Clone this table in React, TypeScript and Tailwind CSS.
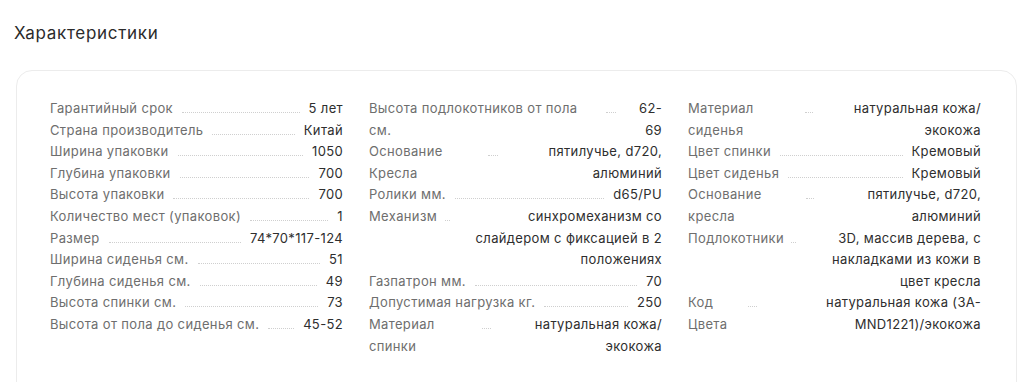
import React from "react";

type Row = {
  label: string[];
  value: string[];
  dots?: { x: number; w: number };
};

const col1: Row[] = [
  { label: ["Гарантийный срок"], value: ["5 лет"] },
  { label: ["Страна производитель"], value: ["Китай"] },
  { label: ["Ширина упаковки"], value: ["1050"] },
  { label: ["Глубина упаковки"], value: ["700"] },
  { label: ["Высота упаковки"], value: ["700"] },
  { label: ["Количество мест (упаковок)"], value: ["1"] },
  { label: ["Размер"], value: ["74*70*117-124"] },
  { label: ["Ширина сиденья см."], value: ["51"] },
  { label: ["Глубина сиденья см."], value: ["49"] },
  { label: ["Высота спинки см."], value: ["73"] },
  { label: ["Высота от пола до сиденья см."], value: ["45-52"] },
];

const col2: Row[] = [
  { label: ["Высота подлокотников от пола", "см."], value: ["62-", "69"], dots: { x: 237, w: 10 } },
  { label: ["Основание", "Кресла"], value: ["пятилучье, d720,", "алюминий"], dots: { x: 119, w: 10 } },
  { label: ["Ролики мм."], value: ["d65/PU"] },
  { label: ["Механизм"], value: ["синхромеханизм со", "слайдером с фиксацией в 2", "положениях"], dots: { x: 76, w: 5 } },
  { label: ["Газпатрон мм."], value: ["70"] },
  { label: ["Допустимая нагрузка кг."], value: ["250"] },
  { label: ["Материал", "спинки"], value: ["натуральная кожа/", "экокожа"], dots: { x: 113, w: 9 } },
];

const col3: Row[] = [
  { label: ["Материал", "сиденья"], value: ["натуральная кожа/", "экокожа"], dots: { x: 117, w: 8 } },
  { label: ["Цвет спинки"], value: ["Кремовый"] },
  { label: ["Цвет сиденья"], value: ["Кремовый"] },
  { label: ["Основание", "кресла"], value: ["пятилучье, d720,", "алюминий"], dots: { x: 118, w: 8 } },
  { label: ["Подлокотники"], value: ["3D, массив дерева, с", "накладками из кожи в", "цвет кресла"], dots: { x: 103, w: 5 } },
  { label: ["Код", "Цвета"], value: ["натуральная кожа (3А-", "MND1221)/экокожа"], dots: { x: 60, w: 9 } },
];

function Lines({ lines }: { lines: string[] }) {
  return (
    <>
      {lines.map((l, i) => (
        <div key={i} className="whitespace-nowrap">
          {l}
        </div>
      ))}
    </>
  );
}

function SpecRow({ row }: { row: Row }) {
  if (row.dots) {
    return (
      <div className="flex items-start">
        <div className="shrink-0 text-[#6e6e6e]" style={{ width: row.dots.x }}>
          <Lines lines={row.label} />
        </div>
        <div
          className="h-[15px] shrink-0 border-b border-dotted border-[#cfcfcf]"
          style={{ width: row.dots.w }}
        />
        <div className="flex-1 text-right text-[#2e2e2e]">
          <Lines lines={row.value} />
        </div>
      </div>
    );
  }
  return (
    <div className="flex items-start">
      <div className="shrink-0 whitespace-nowrap text-[#6e6e6e]">{row.label[0]}</div>
      <div className="mx-[9px] h-[15px] flex-1 border-b border-dotted border-[#cfcfcf]" />
      <div className="shrink-0 whitespace-nowrap text-right text-[#2e2e2e]">{row.value[0]}</div>
    </div>
  );
}

function Column({ rows }: { rows: Row[] }) {
  return (
    <div className="flex flex-col">
      {rows.map((r, i) => (
        <SpecRow key={i} row={r} />
      ))}
    </div>
  );
}

export default function App() {
  return (
    <div
      className="h-[382px] w-[1024px] overflow-hidden bg-white px-4 pt-[21px]"
      style={{ fontFamily: "Inter, 'Noto Sans', sans-serif" }}
    >
      <h2 className="-ml-[2px] text-[17px] leading-[24px] tracking-[0.7px] text-[#2b2b2b]">Характеристики</h2>
      <div className="mt-[25px] h-[330px] w-[1001px] rounded-2xl border border-[#ececec] pl-[33px] pr-[35px] pt-[27px] text-[13px] leading-[21.6px] tracking-[0.35px]">
        <div className="grid grid-cols-3 gap-x-[26px]">
          <Column rows={col1} />
          <Column rows={col2} />
          <Column rows={col3} />
        </div>
      </div>
    </div>
  );
}
